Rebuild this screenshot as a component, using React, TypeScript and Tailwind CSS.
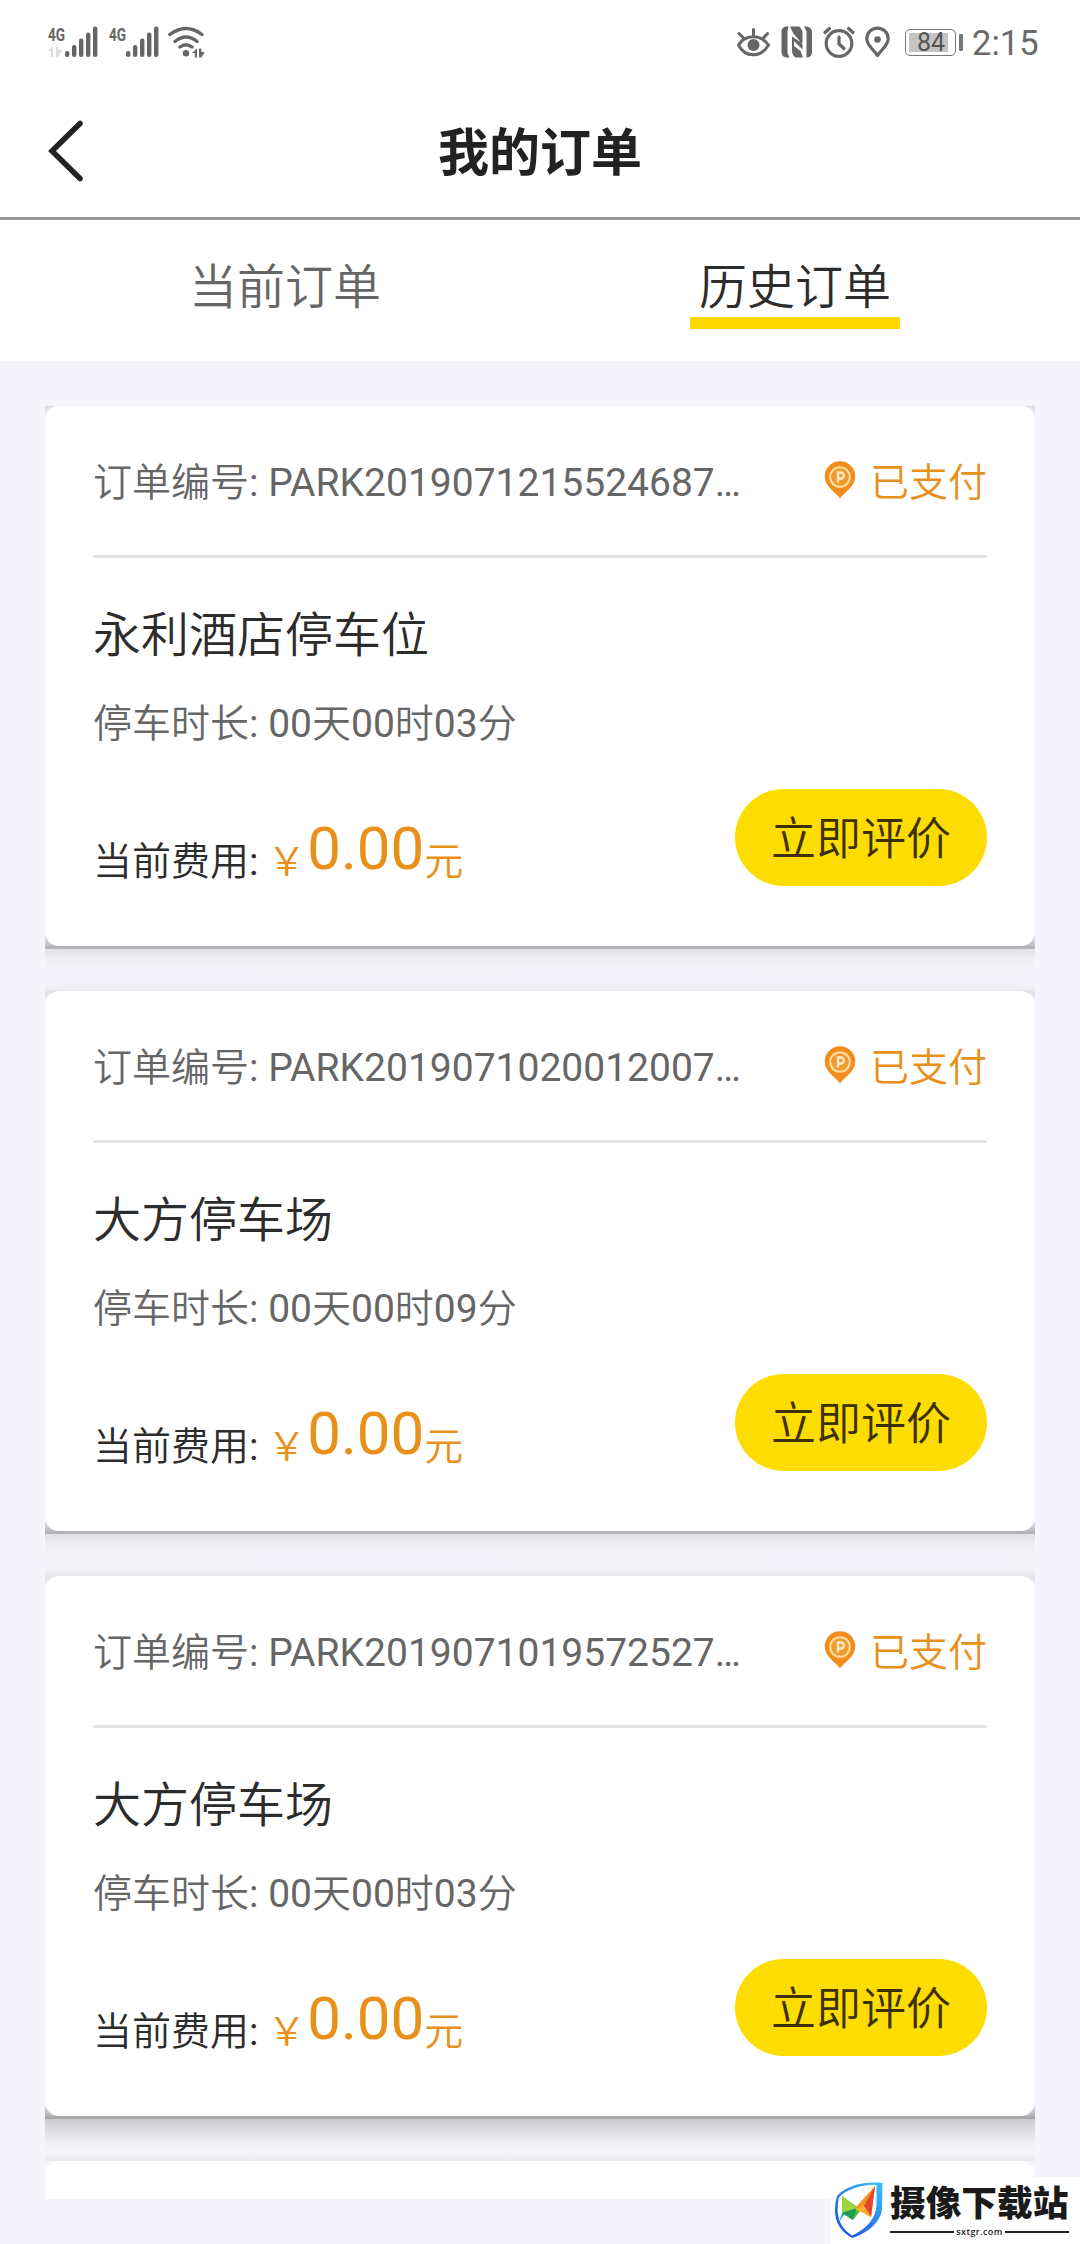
import React from "react";

type Order = { id: string; place: string; duration: string; backdrop: string };

// The backdrop shows through the rounded corners and below the card.
const softShadow =
  "bg-[linear-gradient(to_bottom,#dedee3_0px,#f4f4fa_14px,#f4f4fa_524px,#bdbdc3_540px,#b2b2b8_540px,#b2b2b8_543px,#e0e0e5_543px,#ececf1_552px,#f4f4fa_564px,#f4f4fa_576px,#e8e8ed_585px)]";
const deepShadow =
  "bg-[linear-gradient(to_bottom,#e4e4e9_0px,#f4f4fa_14px,#f4f4fa_520px,#b4b4b8_540px,#a9a9ac_540px,#a9a9ac_543px,#c9c9ce_543px,#dbdbe0_553px,#eeeef3_567px,#f4f4fa_575px,#ebebef_585px)]";

const orders: Order[] = [
  { id: "PARK2019071215524687…", place: "永利酒店停车位", duration: "00天00时03分", backdrop: softShadow },
  { id: "PARK2019071020012007…", place: "大方停车场", duration: "00天00时09分", backdrop: softShadow },
  { id: "PARK2019071019572527…", place: "大方停车场", duration: "00天00时03分", backdrop: deepShadow },
];

// Chinese runs are set slightly lighter than the Latin letters and digits.
function Mixed({ children }: { children: string }) {
  return (
    <>
      {children.split(/([\u4e00-\u9fff]+)/).map((part, i) => (
        <span key={i} className={i % 2 ? "font-[350]" : "font-normal"}>{part}</span>
      ))}
    </>
  );
}

function Signal({ data }: { data?: boolean }) {
  return (
    <svg width="52" height="44" viewBox="0 -10 52 44" fill="#666">
      <text x="0" y="14.500" fontSize="19" fontWeight="700" fontFamily="Roboto, sans-serif" textLength="17" lengthAdjust="spacingAndGlyphs">4G</text>
      {data && <path d="M0 25l5-5v11H3v-6zM8 20h2v3l4.500 1.500-5 6.500H8z" fill="#ddd" />}
      <rect x="17" y="25" width="4.400" height="6" rx="2" />
      <rect x="24" y="19" width="4.400" height="12" rx="2" />
      <rect x="31" y="12.500" width="4.400" height="18.500" rx="2" />
      <rect x="38" y="6.500" width="4.400" height="24.500" rx="2" />
      <rect x="45" y="0.500" width="4.400" height="30.500" rx="2" />
    </svg>
  );
}

function StatusBar() {
  return (
    <div className="flex h-[84px] items-start pt-[16px] pl-[48px]">
      <Signal data />
      <div className="w-[9px]" />
      <Signal />
      <div className="flex items-start pt-[10px]">
        <svg className="ml-[7px]" width="38" height="34" viewBox="0 0 38 34" fill="none" stroke="#666" strokeWidth="3.400" strokeLinecap="round">
          <path d="M1.800 8.500Q18 -3.500 34 8.500M7 15.500Q18 6.500 29 15.500M12 21Q18 16.500 24 21" />
          <circle cx="18" cy="27.300" r="3.200" fill="#666" stroke="none" />
          <path d="M24 27l5-4.500v9h-2.200v-4.500zM31 22.500h2.200v3l3.500 1-3.500 5h-2.200z" fill="#666" stroke="none" />
        </svg>
        <div className="ml-[530px] flex">
          <svg width="36" height="34" viewBox="0 0 36 34" fill="none" stroke="#666" strokeWidth="3" strokeLinecap="round">
            <path d="M2.500 19C9 8 25 8 32.500 19C25 32 9 32 2.500 19zM17.500 10V3.500M8 12.500L3 7.500M27 12.500L31.500 7.500" />
            <circle cx="17.500" cy="19" r="6" fill="#666" stroke="none" />
          </svg>
          <svg className="ml-[9px]" width="32" height="34" viewBox="0 0 32 34" fill="#666">
            <path d="M5 .5C2 1 .5 2.500 .5 6v20c0 3 1.500 5 4.500 5.500h3.500L6.500 27V5l1-4.500zM9 .5h9.500L21.500 5v13.500L12 7zM11 10.500v14c0 3 1 5.500 3.500 7h7.500L19.500 25l-6.500-5v-5l8.500 8.500v-6zM23 .5c5 0 8 1.500 8 5.500v20c0 3.500-2 5.500-5.500 5.500L25.500 24V5z" />
          </svg>
          <svg className="ml-[9px]" width="34" height="34" viewBox="0 0 34 34" fill="none" stroke="#666" strokeWidth="3.200" strokeLinecap="round">
            <circle cx="17" cy="17.500" r="12.800" />
            <path d="M17 11v7l5 4.500M3 6.500L7.500 2.500M31 6.500L26.500 2.500" />
          </svg>
          <svg className="ml-[8px]" width="26" height="34" viewBox="0 0 26 34" fill="none" stroke="#666" strokeWidth="3.200" strokeLinejoin="round">
            <path d="M13.500 29.500C9.500 23.500 2.800 19.500 2.800 12.800a10.700 10.700 0 0 1 21.400 0C24.200 19.500 17.500 23.500 13.500 29.500z" />
            <circle cx="13.500" cy="13.500" r="3.300" fill="#666" stroke="none" />
          </svg>
          <div className="mt-[3px] ml-[15px] flex h-[27px] w-[51px] items-center rounded-[5px] border border-[#777] p-[3px]">
            <div className="flex h-full w-[39px] items-center justify-center bg-[#c4c4c4] pl-[5px] text-[25px] leading-[20px] text-[#555]">84</div>
          </div>
          <div className="mt-[8px] ml-[3px] h-[17px] w-[4px] rounded-[1px] bg-[#777]" />
          <div className="ml-[9px] text-[34.500px] leading-[35px] text-[#6a6a6a]">2:15</div>
        </div>
      </div>
    </div>
  );
}

function Pin() {
  return (
    <svg width="32" height="38" viewBox="0 0 32 38">
      <path d="M16 37.500C12.500 31.500 .7 26 .7 15.500a15.300 15.300 0 0 1 30.600 0C31.300 26 19.500 31.500 16 37.500z" fill="#f28c1a" />
      <circle cx="16" cy="16" r="9.800" fill="#f09a30" stroke="#ffdf9e" strokeWidth="2" />
      <path d="M14 21.500v-10h2.800a3 3 0 0 1 0 6H14" fill="none" stroke="#ffe9c4" strokeWidth="2.400" />
    </svg>
  );
}

function OrderCard({ order }: { order: Order }) {
  return (
    <li className={`h-[585px] ${order.backdrop}`}>
      <article className="h-[540px] rounded-[14px] bg-white px-[48px]">
        <div className="flex h-[152px] items-start justify-between border-b-[3px] border-[#e2e2e2] pt-[55px] text-[39px] leading-[44px]">
          <span className="text-[#666]"><Mixed>{`订单编号: ${order.id}`}</Mixed></span>
          <span className="flex font-[350] text-[#e8901a]">
            <Pin />
            <span className="ml-[14px]">已支付</span>
          </span>
        </div>
        <h2 className="mt-[48px] text-[48px] leading-[60px] font-[350] text-[#2c2c2c]">{order.place}</h2>
        <p className="mt-[36px] text-[39px] leading-[44px] text-[#666]"><Mixed>{`停车时长: ${order.duration}`}</Mixed></p>
        <div className="mt-[43px] flex items-start justify-between">
          <p className="flex text-[39px] leading-[44px] text-[#e8901a]">
            <span className="mt-[51px] whitespace-pre text-[#2c2c2c]"><Mixed>{"当前费用: "}</Mixed></span>
            <span className="mt-[51px] ml-[-1px] font-[350]">￥</span>
            <span className="mt-[30px] ml-px text-[60px] leading-[60px]">0.00</span>
            <span className="mt-[51px] font-[350]">元</span>
          </p>
          <button className="h-[97px] w-[252px] rounded-full bg-[#fddd00] pt-[5px] text-[45px] leading-[48px] font-[350] text-[#3d3006]">立即评价</button>
        </div>
      </article>
    </li>
  );
}

function Watermark() {
  return (
    <div className="absolute right-0 bottom-0 flex h-[67px] w-[250px] bg-white">
      <svg className="mt-[4px] ml-[3px]" width="52" height="60" viewBox="0 0 52 60">
        <defs>
          <linearGradient id="shield" x1="1" y1="0" x2="0.3" y2="1">
            <stop offset="0" stopColor="#35c4fb" />
            <stop offset="1" stopColor="#2450e8" />
          </linearGradient>
        </defs>
        <path d="M49.500 2C34 0 13 4 4 15C-1 34 3 48 19 57C34 52 48 42 49 27z" fill="url(#shield)" />
        <path d="M43.500 4C30 3 14 8 6 16.500C2.500 33 5.500 46 19 54.500C33 48 43 38 43.500 24z" fill="#fff" />
        <path d="M9 15L24 26L32 24L20 39L9 32z" fill="#5fbf2c" />
        <path d="M9 15L24 27L9 32z" fill="#9bd63a" />
        <path d="M9 32L14 30L6 41z" fill="#29abe2" />
        <path d="M9 32L24 27L20 39z" fill="#1f9d55" />
        <path d="M22 27L42 5L38 36z" fill="#f7931e" />
        <path d="M42 5L38 36L31 25z" fill="#e5452b" />
        <path d="M22 28L31 25L38 36z" fill="#fbb52d" />
      </svg>
      <div className="mt-[6px] ml-[5px] w-[179px]">
        <div className="text-[35.700px] leading-[42px] font-black whitespace-nowrap text-[#1a1a1a]">摄像下载站</div>
        <div className="mt-[2px] flex items-center gap-[2px] font-['Open_Sans',sans-serif] text-[9px] leading-[10px] font-semibold text-[#222]">
          <span className="h-[2px] flex-1 bg-[#222]" />
          <span className="tracking-[0.400px]">sxtgr.com</span>
          <span className="h-[2px] flex-1 bg-[#222]" />
        </div>
      </div>
    </div>
  );
}

export default function App() {
  return (
    <div className="relative flex h-[2244px] w-[1080px] flex-col overflow-hidden bg-[#f4f4fa] font-['Roboto','Noto_Sans_CJK_SC',sans-serif]">
      <header className="h-[220px] border-b-[3px] border-[#999] bg-white">
        <StatusBar />
        <div className="grid grid-cols-3 items-start pt-[34px]">
          <svg className="ml-[46px]" width="40" height="66" viewBox="0 0 40 66" fill="none" stroke="#222" strokeWidth="5.500" strokeLinecap="round">
            <path d="M34 5.500L6 33L34 60.500" />
          </svg>
          <h1 className="mt-[1px] text-center text-[51px] leading-[70px] font-bold text-[#222]">我的订单</h1>
        </div>
      </header>
      <nav className="grid h-[141px] grid-cols-2 justify-items-center bg-white px-[30px] pt-[37px] text-[48px] leading-[61px] font-[350]">
        <div className="text-[#666]">当前订单</div>
        <div className="h-[72px] w-[210px] border-b-[12px] border-[#fdd900] text-center text-[#2c2c2c]">历史订单</div>
      </nav>
      <main className="mx-[45px] mt-[45px] h-[1793px] overflow-hidden">
        <ul>
          {orders.map((order) => (
            <OrderCard key={order.id} order={order} />
          ))}
          <li className="h-[540px] rounded-t-[14px] bg-white" />
        </ul>
      </main>
      <Watermark />
    </div>
  );
}
